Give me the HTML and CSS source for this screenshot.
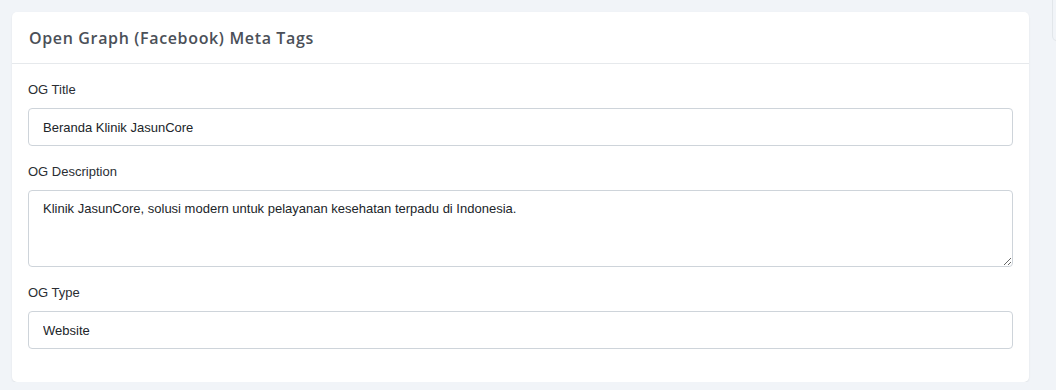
FILE: index.html
```html
<!DOCTYPE html>
<html lang="en">
<head>
    <meta charset="UTF-8">
    <meta name="viewport" content="width=device-width, initial-scale=1.0">
    <title>SEO Settings</title>
    <link rel="stylesheet" href="styles.css">
</head>
<body>
    <div class="page">
        <div class="card">
            <div class="card-header">
                <h5 class="card-title">Open Graph (Facebook) Meta Tags</h5>
            </div>
            <div class="card-body">
                <div class="form-group">
                    <label class="form-label" for="og-title">OG Title</label>
                    <input class="form-control" id="og-title" type="text" value="Beranda Klinik JasunCore">
                </div>
                <div class="form-group">
                    <label class="form-label" for="og-desc">OG Description</label>
                    <textarea class="form-control" id="og-desc" rows="3">Klinik JasunCore, solusi modern untuk pelayanan kesehatan terpadu di Indonesia.</textarea>
                </div>
                <div class="form-group">
                    <label class="form-label" for="og-type">OG Type</label>
                    <input class="form-control" id="og-type" type="text" value="Website">
                </div>
            </div>
        </div>
        <div class="side-card"></div>
    </div>
</body>
</html>
```

FILE: styles.css
```css
* {
    box-sizing: border-box;
}

body {
    margin: 0;
    background-color: #f1f4f8;
    font-family: "Liberation Sans", Arial, sans-serif;
    font-size: 13px;
    color: #212529;
}

.page {
    display: flex;
    align-items: flex-start;
    gap: 23px;
    padding: 12px 0 0 12px;
    overflow: hidden;
}

.card {
    flex: 0 0 1017px;
    background-color: #fff;
    border-radius: 5px;
    box-shadow: 0 1px 2px rgba(0, 0, 0, 0.08);
}

.card-header {
    height: 52px;
    padding: 0 17px;
    display: flex;
    align-items: center;
    border-bottom: 1px solid #e6e9ec;
}

.card-title {
    margin: 0;
    font-family: "Open Sans", sans-serif;
    font-size: 16px;
    font-weight: 600;
    color: #4b5058;
    letter-spacing: 0.65px;
}

.card-body {
    padding: 18px 16px 33px;
}

.form-group + .form-group {
    margin-top: 18px;
}

.form-label {
    display: block;
    margin-bottom: 10px;
    line-height: 16px;
    color: #2a2e33;
}

.form-control {
    display: block;
    width: 100%;
    height: 38px;
    padding: 0 14px;
    border: 1px solid #ced4da;
    border-radius: 4px;
    background-color: #fff;
    font-family: inherit;
    font-size: 13px;
    color: #212529;
}

textarea.form-control {
    height: 77px;
    padding: 9px 14px;
    line-height: 18px;
    resize: vertical;
}

.side-card {
    flex: 0 0 40px;
    height: 41px;
    margin-top: -12px;
    background-color: #f1f4f8;
    border: 1px solid #e2e6ea;
    border-top: none;
    border-radius: 0 0 5px 5px;
}
```
